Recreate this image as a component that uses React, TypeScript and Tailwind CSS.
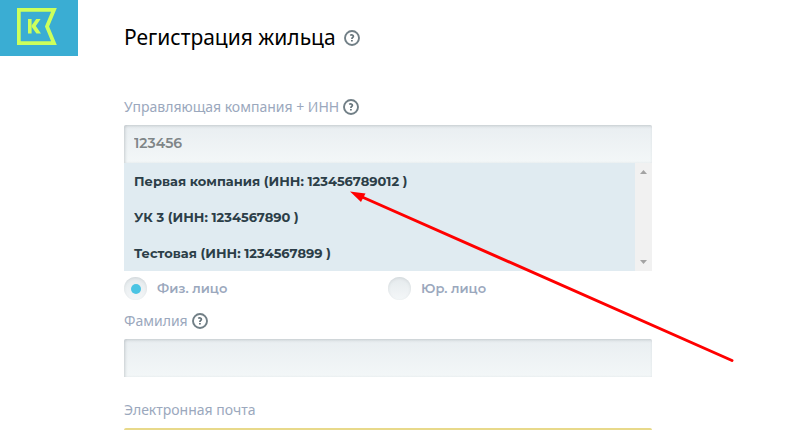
import { useState } from "react";
import clsx from "clsx";

const companies = [
  { name: "Первая компания", inn: "123456789012" },
  { name: "УК 3", inn: "1234567890" },
  { name: "Тестовая", inn: "1234567899" },
];

const personTypes = [
  { value: "person", label: "Физ. лицо" },
  { value: "company", label: "Юр. лицо" },
];

const fieldClass =
  "block h-[38px] w-full rounded-t-xs bg-linear-to-b from-[#e9eef1] to-[#f3f7f8] px-2.5 pb-0.5 font-[Montserrat,Inter,sans-serif] text-sm font-semibold text-[#7f8688] shadow-[inset_1px_1px_3px_rgba(120,130,135,0.35)] outline-none";

function Logo() {
  return (
    <a href="#" aria-label="К" className="flex h-14 w-[78px] shrink-0 items-center justify-center bg-[#3aadd3] pr-1 pb-1">
      <svg width="40" height="37" viewBox="0 0 40 37" fill="none">
        <path d="M1.8 1.8H37L30 18.5L37 35.2H1.8Z" stroke="#ccff5c" strokeWidth="3.8" />
        <path d="M12.8 11V25.5" stroke="#ccff5c" strokeWidth="3.6" />
        <path d="M19.2 11H23.6L18.8 18.1L24 25.5H19.4L14.6 18.8V17.4Z" fill="#ccff5c" />
      </svg>
    </a>
  );
}

function Help() {
  return (
    <button type="button" aria-label="Подсказка" className="size-4 shrink-0">
      <svg width="16" height="16" viewBox="0 0 16 16" fill="none">
        <circle cx="8" cy="8" r="7" stroke="#717f86" strokeWidth="1.9" />
        <path d="M6.2 5.4C7.5 4.5 9.4 4.9 9.4 6.2C9.4 7.4 7.9 7.5 7.9 8.9" stroke="#66747b" strokeWidth="1.7" />
        <path d="M7 9.9H8.8V11.5H7Z" fill="#66747b" />
      </svg>
    </button>
  );
}

function FieldLabel({ id, text, help }: { id: string; text: string; help?: boolean }) {
  return (
    <div className="flex h-9 items-center gap-1 text-sm text-[#9ba8bd]">
      <label htmlFor={id}>{text}</label>
      {help && <Help />}
    </div>
  );
}

export default function App() {
  const [company, setCompany] = useState("123456");
  const [type, setType] = useState("person");

  return (
    <div className="relative flex h-screen items-start overflow-hidden bg-white font-['Noto_Sans',sans-serif]">
      <Logo />

      <main className="min-w-0 grow pt-5 pr-[150px] pl-[46px]">
        <div className="flex h-9 items-center gap-2">
          <h1 className="text-[21px] text-black">Регистрация жильца</h1>
          <Help />
        </div>

        <form className="mt-[33px]">
          <FieldLabel id="company" text="Управляющая компания + ИНН" help />
          <input
            id="company"
            className={fieldClass}
            value={company}
            onChange={(e) => setCompany(e.target.value)}
          />

          {/* Suggestions */}
          <div className="flex bg-[#e0ebf1]">
            <ul role="listbox" aria-label="Компании" className="grow">
              {companies.map((item) => (
                <li
                  key={item.inn}
                  role="option"
                  aria-selected={false}
                  onClick={() => setCompany(item.inn)}
                  className="flex h-9 cursor-pointer items-center px-2.5 pt-0.5 font-[Montserrat,Inter,sans-serif] text-[13px] font-bold text-[#2c3e48]"
                >
                  {item.name} (ИНН: {item.inn} )
                </li>
              ))}
            </ul>
            <div aria-hidden className="flex w-[17px] flex-col items-center justify-between bg-[#f1f1f1] py-[7px]">
              <svg width="7" height="4" viewBox="0 0 7 4" fill="#a3a3a3">
                <path d="M3.5 0L7 4H0Z" />
              </svg>
              <svg width="7" height="4" viewBox="0 0 7 4" fill="#a3a3a3">
                <path d="M0 0H7L3.5 4Z" />
              </svg>
            </div>
          </div>

          {/* Person type */}
          <div className="grid h-8 grid-cols-2 items-end pb-[3px]">
            {personTypes.map(({ value, label }) => (
              <label
                key={value}
                className="flex items-center gap-2.5 font-[Montserrat,Inter,sans-serif] text-[13px] font-semibold text-[#9ba8bd]"
              >
                <span className="grid size-[23px] place-items-center rounded-full bg-linear-to-b from-[#e5eaed] to-[#f4f7f8] shadow-[inset_0_1px_3px_rgba(120,130,135,0.2)]">
                  <input
                    type="radio"
                    name="type"
                    value={value}
                    checked={type === value}
                    onChange={() => setType(value)}
                    className={clsx("size-2.5 appearance-none rounded-full", "checked:bg-[#4ac4e3]")}
                  />
                </span>
                {label}
              </label>
            ))}
          </div>

          <FieldLabel id="surname" text="Фамилия" help />
          <input id="surname" className={fieldClass} />

          <div className="mt-[15px]">
            <FieldLabel id="email" text="Электронная почта" />
            <input
              id="email"
              type="email"
              className="block h-[38px] w-full rounded-t-xs border-2 border-[#e8d98a] bg-[#faf6dc] px-2.5"
            />
          </div>
        </form>
      </main>

      {/* Pointer to the first suggestion */}
      <svg
        aria-hidden
        className="pointer-events-none absolute top-[190px] left-[349px]"
        width="386"
        height="174"
        viewBox="0 0 386 174"
      >
        <path d="M12 6.5L383 170.5" stroke="#ff0000" strokeWidth="3" strokeLinecap="round" />
        <path d="M1 1.5L16.5 3.5L12 12Z" fill="#ff0000" />
      </svg>
    </div>
  );
}
